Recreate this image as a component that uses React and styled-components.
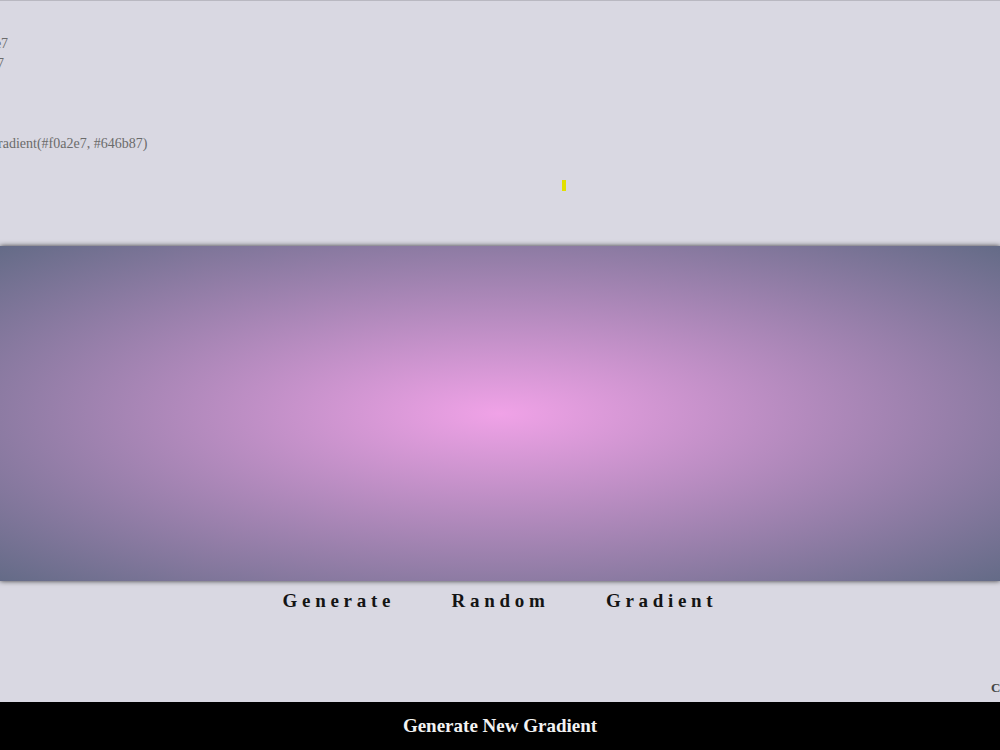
import React from 'react';
import styled, { createGlobalStyle } from 'styled-components';

const colors = {
  page: '#d9d8e2',
  rule: '#b9b8c1',
  infoText: '#6b6b6b',
  darkText: '#141414',
  start: '#f0a2e7',
  end: '#646b87',
};

const GlobalStyle = createGlobalStyle`
  html, body {
    margin: 0;
    padding: 0;
    background: ${colors.page};
    overflow: hidden;
  }
  body {
    font-family: "Liberation Serif", "Times New Roman", serif;
  }
`;

const Page = styled.div`
  min-height: 750px;
  display: flex;
  flex-direction: column;
  border-top: 1px solid ${colors.rule};
  box-sizing: border-box;
`;

const InfoArea = styled.section`
  height: 244px;
  padding-top: 33px;
  box-sizing: border-box;
  display: flex;
  flex-direction: column;
  align-items: flex-start;
`;

const InfoLine = styled.div`
  font-size: 14px;
  line-height: 20px;
  color: ${colors.infoText};
  white-space: nowrap;
  margin-left: ${(p) => p.$shift}px;
  margin-top: ${(p) => p.$gap || 0}px;
`;

const Marker = styled.span`
  display: block;
  width: 4px;
  height: 11px;
  margin: 26px 0 0 562px;
  background: #e2e000;
`;

const Preview = styled.div`
  height: 335px;
  margin-top: 1px;
  background: radial-gradient(${colors.start}, ${colors.end});
  box-shadow: 0 0 5px rgba(0, 0, 0, 0.75);
`;

const Title = styled.h1`
  margin: 9px 0 0;
  font-size: 19px;
  line-height: 22px;
  font-weight: bold;
  letter-spacing: 4.7px;
  word-spacing: 47px;
  text-align: center;
  color: ${colors.darkText};
`;

const Spacer = styled.div`
  flex: 1;
`;

const Credit = styled.div`
  padding-left: 991px;
  margin-bottom: 6px;
  font-size: 13px;
  line-height: 16px;
  font-weight: bold;
  color: #444;
  white-space: nowrap;
  overflow: hidden;
`;

const Footer = styled.button`
  height: 48px;
  border: none;
  width: 100%;
  background: #000;
  color: #f2f2f2;
  font-family: "Liberation Serif", "Times New Roman", serif;
  font-size: 19px;
  font-weight: bold;
  cursor: pointer;
`;

const App = () => {
  return (
    <Page>
      <GlobalStyle />
      <InfoArea>
        <InfoLine $shift={-37}>#f0a2e7</InfoLine>
        <InfoLine $shift={-45}>#646b87</InfoLine>
        <InfoLine $shift={-119} $gap={60}>
          background: radial-gradient(#f0a2e7, #646b87)
        </InfoLine>
        <Marker />
      </InfoArea>
      <Preview />
      <Title>Generate Random Gradient</Title>
      <Spacer />
      <Credit>Created by</Credit>
      <Footer>Generate New Gradient</Footer>
    </Page>
  );
};

export default App;
